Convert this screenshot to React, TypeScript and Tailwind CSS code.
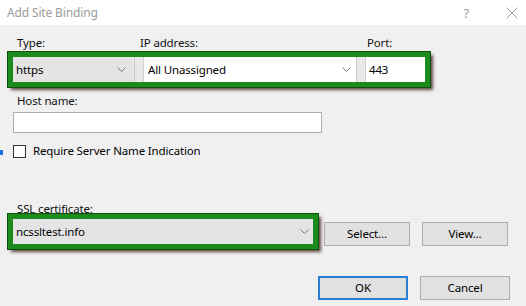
import React from 'react'

// Small combo box chevron, Windows 10 style
function Chevron({ className = '' }: { className?: string }) {
  return (
    <svg width="9" height="5" viewBox="0 0 9 5" className={className}>
      <path d="M0.5 0.5 L4.5 4.5 L8.5 0.5" fill="none" stroke="#7a7a7a" strokeWidth="1" />
    </svg>
  )
}

// Green highlight frame drawn around the controls in the screenshot
function GreenFrame({ className = '', children }: { className?: string; children: React.ReactNode }) {
  return (
    <div
      className={`border-[5px] border-[#1d8a1d] shadow-[0_0_0_1px_#0c520c,3px_3px_3px_rgba(50,15,5,0.75)] ${className}`}
    >
      {children}
    </div>
  )
}

function Button({ label, primary = false, className = '' }: { label: string; primary?: boolean; className?: string }) {
  return (
    <div
      className={`h-[24px] flex items-center justify-center bg-[#e1e1e1] ${
        primary ? 'border-2 border-[#2a7fd4]' : 'border border-[#adadad]'
      } ${className}`}
    >
      {label}
    </div>
  )
}

export default function App() {
  return (
    <div className="w-[526px] h-[306px] overflow-hidden flex flex-col bg-[#f0f0f0] text-[11.5px] tracking-[-0.15px] leading-[16px] text-black font-['Segoe_UI','Noto_Sans',sans-serif]">
      {/* Title bar */}
      <div className="h-[25px] shrink-0 bg-white flex items-center pl-[7px] pr-[8px]">
        <span className="text-[#9b9b9b] text-[12px]">Add Site Binding</span>
        <span className="ml-auto mr-[37px] text-[#9b9b9b] text-[13px]">?</span>
        <svg width="12" height="12" viewBox="0 0 12 12">
          <path d="M0.5 0.5 L11.5 11.5 M11.5 0.5 L0.5 11.5" stroke="#9b9b9b" strokeWidth="1" />
        </svg>
      </div>

      {/* Type / IP address / Port */}
      <div className="pt-[10px] flex h-[26px] text-[#111]">
        <span className="ml-[17px] w-[123px]">Type:</span>
        <span className="w-[227px]">IP address:</span>
        <span>Port:</span>
      </div>
      <GreenFrame className="ml-[8px] mt-[1px] w-[422px] h-[35px] flex bg-[#e8e8e8]">
        <div className="w-[119px] h-full bg-[#e4e4e4] flex items-center pl-[3px] pr-[6px]">
          <span>https</span>
          <Chevron className="ml-auto" />
        </div>
        <div className="w-[9px] h-full border-l border-[#c9c9c9] ml-[2px]" />
        <div className="w-[213px] h-full bg-white border-l border-[#cfcfcf] flex items-center pl-[4px] pr-[5px]">
          <span>All Unassigned</span>
          <Chevron className="ml-auto" />
        </div>
        <div className="w-[9px] h-full border-l border-[#c9c9c9]" />
        <div className="flex-1 h-full bg-white border-l border-[#cfcfcf] flex items-center pl-[3px]">443</div>
      </GreenFrame>

      {/* Host name */}
      <div className="mt-[6px] ml-[17px] text-[#111]">Host name:</div>
      <div className="mt-[3px] ml-[13px] w-[309px] h-[21px] bg-white border border-[#adadad]" />

      {/* SNI checkbox */}
      <div className="mt-[10px] h-[16px] flex items-center">
        <div className="w-[3px] h-[5px] bg-[#1e6fd9] mt-[2px]" />
        <div className="ml-[10px] w-[13px] h-[13px] bg-white border border-[#333]" />
        <span className="ml-[7px]">Require Server Name Indication</span>
      </div>

      {/* SSL certificate */}
      <div className="mt-[42px] ml-[17px] text-[#111]">SSL certificate:</div>
      <div className="mt-[-3px] flex items-start">
        <GreenFrame className="ml-[8px] w-[310px] h-[35px] flex">
          <div className="flex-1 h-full bg-[#e4e4e4] flex items-center pl-[3px] pr-[4px]">
            <span>ncssltest.info</span>
            <Chevron className="ml-auto" />
          </div>
        </GreenFrame>
        <Button label="Select..." className="ml-[6px] mt-[8px] w-[86px]" />
        <Button label="View..." className="ml-[12px] mt-[8px] w-[86px]" />
      </div>

      {/* Dialog buttons */}
      <div className="mt-[27px] flex justify-end pr-[16px] gap-[12px]">
        <Button label="OK" primary className="w-[90px]" />
        <Button label="Cancel" className="w-[90px]" />
      </div>
    </div>
  )
}
